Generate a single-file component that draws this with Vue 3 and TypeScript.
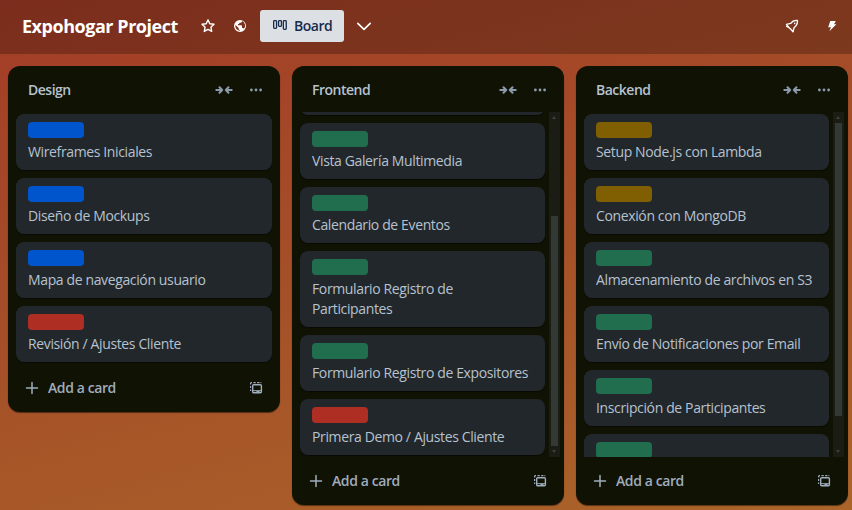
<script setup lang="ts">
interface Card {
  title: string
  label: 'blue' | 'red' | 'green' | 'yellow'
}
interface List {
  name: string
  key: string
  cards: Card[]
  thumb?: { top: number; height: number }
}

const lists: List[] = [
  {
    name: 'Design',
    key: 'design',
    cards: [
      { title: 'Wireframes Iniciales', label: 'blue' },
      { title: 'Diseño de Mockups', label: 'blue' },
      { title: 'Mapa de navegación usuario', label: 'blue' },
      { title: 'Revisión / Ajustes Cliente', label: 'red' },
    ],
  },
  {
    name: 'Frontend',
    key: 'frontend',
    thumb: { top: 104, height: 230 },
    cards: [
      { title: '', label: 'green' },
      { title: 'Vista Galería Multimedia', label: 'green' },
      { title: 'Calendario de Eventos', label: 'green' },
      { title: 'Formulario Registro de Participantes', label: 'green' },
      { title: 'Formulario Registro de Expositores', label: 'green' },
      { title: 'Primera Demo / Ajustes Cliente', label: 'red' },
    ],
  },
  {
    name: 'Backend',
    key: 'backend',
    thumb: { top: 11, height: 293 },
    cards: [
      { title: 'Setup Node.js con Lambda', label: 'yellow' },
      { title: 'Conexión con MongoDB', label: 'yellow' },
      { title: 'Almacenamiento de archivos en S3', label: 'green' },
      { title: 'Envío de Notificaciones por Email', label: 'green' },
      { title: 'Inscripción de Participantes', label: 'green' },
      { title: '', label: 'green' },
    ],
  },
]
</script>

<template>
  <div class="app">
    <header class="topbar">
      <h1 class="title">Expohogar Project</h1>
      <button class="icon-btn star">
        <svg width="16" height="16" viewBox="0 0 16 16" fill="none" stroke="currentColor" stroke-width="1.4" stroke-linejoin="round">
          <path d="M8 1.9 9.8 5.8 14 6.3 10.9 9.2 11.7 13.4 8 11.4 4.3 13.4 5.1 9.2 2 6.3 6.2 5.8Z" />
        </svg>
      </button>
      <button class="icon-btn">
        <svg width="16" height="16" viewBox="0 0 24 24" fill="currentColor" fill-rule="evenodd">
          <path d="M12 3a9 9 0 1 0 0 18 9 9 0 0 0 0-18ZM5 12c0-.5.1-1 .2-1.5L10 15v1c0 1.1.9 2 2 2v1c-3.9 0-7-3.100-7-7Zm12.900 4.300c-.3-.8-1-1.300-1.900-1.300h-1v-3c0-.6-.4-1-1-1H9V9h1c.6 0 1-.4 1-1V7h2c1.100 0 2-.9 2-2v-.4a7.500 7.500 0 0 1 2.900 11.700Z" />
        </svg>
      </button>
      <button class="board-btn">
        <svg width="16" height="16" viewBox="0 0 16 16" fill="none" stroke="currentColor" stroke-width="1.3">
          <rect x="1.650" y="2.650" width="2.900" height="7.700" rx=".8" />
          <rect x="6.550" y="2.650" width="2.900" height="5.700" rx=".8" />
          <rect x="11.350" y="2.650" width="2.900" height="8.700" rx=".8" />
        </svg>
        <span>Board</span>
      </button>
      <button class="icon-btn chevron">
        <svg width="16" height="16" viewBox="0 0 16 16" fill="none" stroke="currentColor" stroke-width="1.7" stroke-linecap="round" stroke-linejoin="round">
          <path d="M1.8 5.400 8 11.300 14.200 5.400" />
        </svg>
      </button>
      <span class="spacer"></span>
      <button class="icon-btn rocket">
        <svg width="16" height="16" viewBox="0 0 16 16" fill="none" stroke="currentColor" stroke-width="1.4" stroke-linejoin="round">
          <path d="M13.400 2.400c-3-.3-5.200.8-6.700 3L2.500 6.400l1.800 2.500 2.800 2.700 1.900 2.200 1-4c2.400-1.800 3.700-4.200 3.400-7.400Z" />
          <path d="M4.300 9 2.600 8.300M10.600 5.300l.1.100" stroke-linecap="round" />
        </svg>
      </button>
      <button class="icon-btn">
        <svg width="16" height="16" viewBox="0 0 16 16" fill="currentColor">
          <path d="M6.300 3h5.500L10 6.300h2.400L5.400 13.300 6.900 9.200H4.200Z" />
        </svg>
      </button>
    </header>

    <main class="board">
      <section v-for="list in lists" :key="list.key" class="list" :class="list.key">
        <div class="list-head">
          <h2>{{ list.name }}</h2>
          <svg class="collapse" width="18" height="12" viewBox="0 0 18 12" fill="none" stroke="currentColor" stroke-width="2" stroke-linecap="round" stroke-linejoin="round">
            <path d="M1.300 6h5.200M4.500 3.200 7.200 6 4.500 8.800M16.700 6h-5.200M13.500 3.200 10.800 6l2.700 2.800" />
          </svg>
          <svg class="more" width="16" height="16" viewBox="0 0 16 16" fill="currentColor">
            <circle cx="3.400" cy="8" r="1.400" /><circle cx="8" cy="8" r="1.400" /><circle cx="12.600" cy="8" r="1.400" />
          </svg>
        </div>
        <div class="list-body">
          <div class="cards">
            <article v-for="(card, i) in list.cards" :key="i" class="card">
              <span class="label" :class="card.label"></span>
              <p>{{ card.title }}</p>
            </article>
          </div>
          <div v-if="list.thumb" class="scrollbar">
            <i class="arrow up"></i>
            <i class="thumb" :style="{ top: list.thumb.top + 'px', height: list.thumb.height + 'px' }"></i>
            <i class="arrow down"></i>
          </div>
        </div>
        <div class="list-foot">
          <svg width="16" height="16" viewBox="0 0 16 16" fill="none" stroke="currentColor" stroke-width="1.5" stroke-linecap="round">
            <path d="M8 2.500v11M2.500 8h11" />
          </svg>
          <span>Add a card</span>
          <svg class="template" width="16" height="16" viewBox="0 0 16 16" fill="none" stroke="currentColor">
            <path d="M2.600 3v1.500M2.600 6v2M2.600 9.500v1.500M2.500 2.600H4M5.500 2.600h2.200M9.200 2.600h2.200M12.500 2.600h.8" stroke-width="1.200" />
            <rect x="4.700" y="4.700" width="8.700" height="8.100" rx="1" stroke-width="1.400" />
            <path d="M4.700 10.700h8.700" stroke-width="1" />
            <path d="M8.500 11.600h3" stroke-width="1.400" />
          </svg>
        </div>
      </section>
    </main>
  </div>
</template>

<style>
body {
  margin: 0;
  overflow: hidden;
}
</style>

<style scoped>
.app {
  width: 852px;
  height: 510px;
  overflow: hidden;
  display: flex;
  flex-direction: column;
  background: linear-gradient(165deg, #a33c27 0%, #a55028 50%, #ab6529 100%);
  font-family: 'Segoe UI', 'Open Sans', 'Noto Sans', sans-serif;
  font-size: 14px;
  line-height: 20px;
}
.topbar {
  flex: none;
  height: 54px;
  box-sizing: border-box;
  padding: 0 4px 2px 22px;
  display: flex;
  align-items: center;
  background: rgba(0, 0, 0, 0.24);
  color: #fff;
}
.title {
  margin: 0;
  width: 170px;
  font-size: 18px;
  font-weight: 700;
  line-height: 32px;
  letter-spacing: -0.46px;
  white-space: nowrap;
}
button {
  border: 0;
  padding: 0;
  background: none;
  color: inherit;
  font: inherit;
}
svg {
  display: block;
  flex: none;
}
.icon-btn {
  width: 32px;
  height: 32px;
  display: flex;
  align-items: center;
  justify-content: center;
}
.board-btn {
  width: 84px;
  height: 32px;
  margin-left: 4px;
  padding-left: 12px;
  display: flex;
  align-items: center;
  gap: 6px;
  border-radius: 3px;
  background: #dcdfe4;
  color: #172b4d;
  font-weight: 600;
  letter-spacing: -0.5px;
}
.chevron {
  margin-left: 4px;
}
.spacer {
  flex: 1;
}
.rocket {
  margin-right: 8px;
}
.board {
  display: flex;
  align-items: flex-start;
  gap: 12px;
  padding: 12px 8px;
}
.list {
  flex: none;
  width: 272px;
  border-radius: 12px;
  background: #101204;
  color: #9fadbc;
  box-shadow: 0 1px 1px rgba(3, 4, 4, 0.5);
}
.list-head {
  height: 46px;
  box-sizing: border-box;
  padding: 2px 16px 0 20px;
  display: flex;
  align-items: center;
}
.list-head h2 {
  flex: 1;
  margin: 0;
  font-size: 14px;
  font-weight: 650;
  color: #b6c2cf;
  letter-spacing: -0.5px;
}
.list-head svg {
  color: #8c9bab;
}
.collapse {
  margin-right: 15px;
}
.list-body {
  display: flex;
  gap: 4px;
  padding: 0 4px 0 8px;
}
.cards {
  flex: 1;
  display: flex;
  flex-direction: column;
  gap: 8px;
  padding: 2px 0;
}
.design .list-body {
  padding-right: 8px;
}
.frontend .list-body,
.backend .list-body {
  height: 345px;
  overflow: hidden;
}
.frontend .cards {
  margin-top: -55px;
}
.card {
  flex: none;
  padding: 8px 12px;
  border-radius: 8px;
  background: #22272b;
  box-shadow: 0 1px 1px rgba(3, 4, 4, 0.5);
  color: #b6c2cf;
}
.card p {
  margin: 4px 0 0;
  min-height: 20px;
  letter-spacing: -0.37px;
}
.label {
  display: block;
  width: 56px;
  height: 16px;
  border-radius: 4px;
}
.blue { background: #0055cc; }
.red { background: #ae2e24; }
.green { background: #216e4e; }
.yellow { background: #7f5f01; }
.scrollbar {
  position: relative;
  width: 11px;
  height: 345px;
  background: #1b1d14;
}
.thumb {
  position: absolute;
  left: 2px;
  width: 7px;
  background: #333935;
}
.arrow {
  position: absolute;
  left: 3px;
  border: 2.5px solid transparent;
}
.up {
  top: 2px;
  border-bottom: 3px solid #3a403a;
}
.down {
  bottom: 2px;
  border-top: 3px solid #3a403a;
}
.list-foot {
  height: 48px;
  box-sizing: border-box;
  padding: 0 16px;
  display: flex;
  align-items: center;
  gap: 8px;
  font-weight: 650;
  letter-spacing: -0.4px;
}
.list-foot span {
  flex: 1;
}
</style>
